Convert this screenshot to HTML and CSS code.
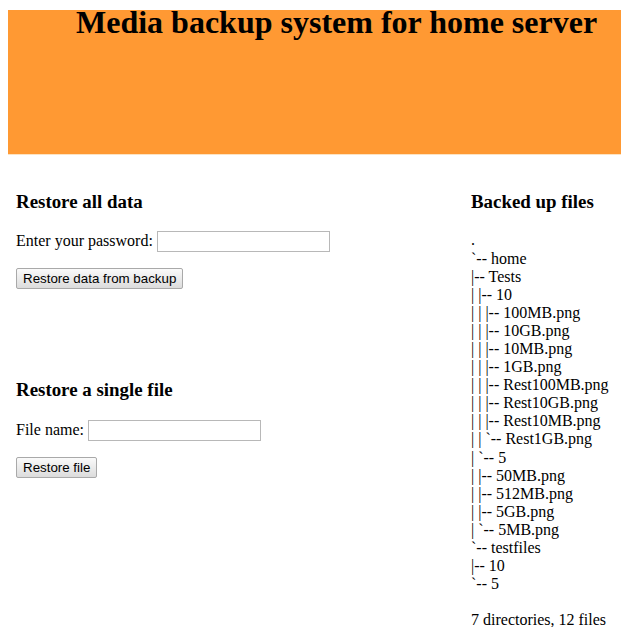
FILE: index.html
```html
<!DOCTYPE html>
<html lang="en">
<head>
<meta charset="utf-8">
<title>Media backup system for home server</title>
<link rel="stylesheet" href="styles.css">
</head>
<body>
  <header class="banner">
    <h1 class="banner-title">Media backup system for home server</h1>
  </header>

  <main class="columns">
    <div class="actions">
      <section class="panel">
        <h3 class="panel-title">Restore all data</h3>
        <form class="restore-form">
          <p class="field">
            <label for="password">Enter your password:</label>
            <input id="password" class="text-input" type="password">
          </p>
          <p class="field">
            <button type="button" class="btn">Restore data from backup</button>
          </p>
        </form>
      </section>

      <section class="panel panel-single">
        <h3 class="panel-title">Restore a single file</h3>
        <form class="restore-form">
          <p class="field">
            <label for="filename">File name:</label>
            <input id="filename" class="text-input" type="text">
          </p>
          <p class="field">
            <button type="button" class="btn">Restore file</button>
          </p>
        </form>
      </section>
    </div>

    <aside class="files">
      <h3 class="panel-title">Backed up files</h3>
      <div class="tree">
        <div>.</div>
        <div>`-- home</div>
        <div>|-- Tests</div>
        <div>| |-- 10</div>
        <div>| | |-- 100MB.png</div>
        <div>| | |-- 10GB.png</div>
        <div>| | |-- 10MB.png</div>
        <div>| | |-- 1GB.png</div>
        <div>| | |-- Rest100MB.png</div>
        <div>| | |-- Rest10GB.png</div>
        <div>| | |-- Rest10MB.png</div>
        <div>| | `-- Rest1GB.png</div>
        <div>| `-- 5</div>
        <div>| |-- 50MB.png</div>
        <div>| |-- 512MB.png</div>
        <div>| |-- 5GB.png</div>
        <div>| `-- 5MB.png</div>
        <div>`-- testfiles</div>
        <div>|-- 10</div>
        <div>`-- 5</div>
        <div class="tree-gap"></div>
        <div>7 directories, 12 files</div>
      </div>
    </aside>
  </main>
</body>
</html>
```

FILE: styles.css
```css
html, body {
  background: #ffffff;
}

/* no right margin: the banner runs out to the window edge */
body {
  margin: 8px 0 8px 8px;
  font-family: "Liberation Serif", "Times New Roman", serif;
  font-size: 16px;
  color: #000000;
}

/* orange page banner */
.banner {
  display: flow-root;
  background: #ff9933;
  height: 144px;
  margin: 2px 0 0 0;
  border-bottom: 1px solid #fde3c2;
}

.banner-title {
  margin: 0;
  padding-left: 68px;
  font-size: 32px;
  line-height: 24px;
  font-weight: bold;
}

/* two-column body */
.columns {
  display: grid;
  grid-template-columns: 463px 1fr;
  margin-top: 17px;
}

.actions {
  padding-left: 8px;
}

.panel-title {
  margin: 18.72px 0;
  font-size: 18.9px;
  font-weight: bold;
}

.panel-single {
  margin-top: 90px;
}

.restore-form {
  margin: 0;
}

.field {
  margin: 16px 0;
}

.text-input {
  width: 173px;
  height: 21px;
  box-sizing: border-box;
  margin: 0;
  padding: 1px 2px;
  border: 1px solid #b8b8b8;
  border-radius: 0;
  background: #ffffff;
  font-family: "Liberation Sans", Arial, sans-serif;
  font-size: 13.33px;
  vertical-align: baseline;
}

.btn {
  height: 21px;
  margin: 0;
  padding: 0 6px;
  border: 1px solid #a9a9a9;
  border-radius: 2px;
  background: linear-gradient(#fafafa, #dcdcdc);
  font-family: "Liberation Sans", Arial, sans-serif;
  font-size: 13.33px;
  color: #000000;
}

/* directory listing */
.tree {
  line-height: 18.1px;
  white-space: nowrap;
}

.tree-gap {
  height: 18.1px;
}
```
